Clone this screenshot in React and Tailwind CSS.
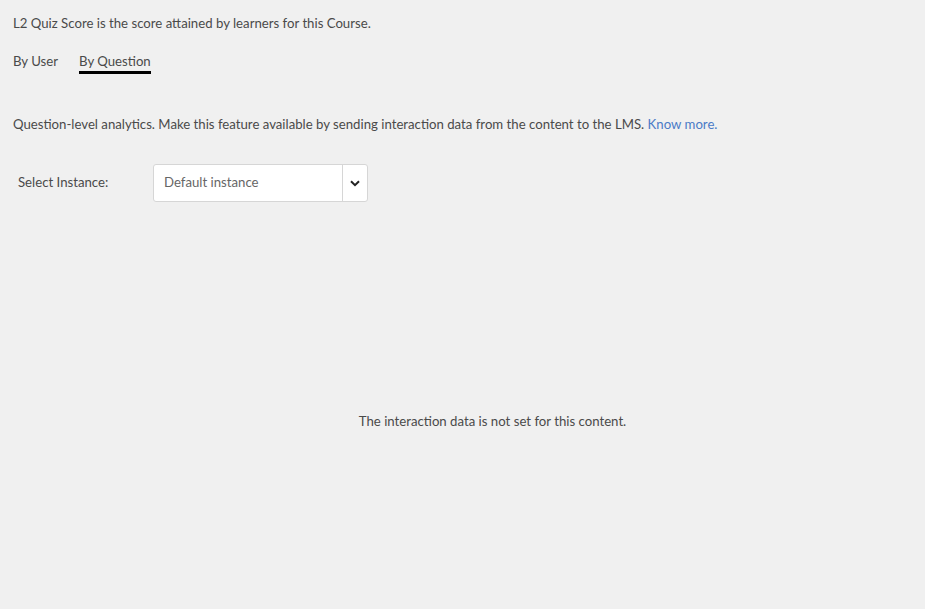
export default function App() {
  return (
    <div className="min-h-[609px] w-full bg-[#f0f0f0] text-[#4a4a4a] text-[13.2px]" style={{ fontFamily: "Lato, 'Open Sans', sans-serif" }}>
      <div className="px-[13px] pt-[14px]">
        <p className="leading-[18px]">L2 Quiz Score is the score attained by learners for this Course.</p>
        <div className="mt-[20px] flex gap-[21px] leading-[18px]">
          <div className="pb-[4px]">By User</div>
          <div className="pb-[1px] border-b-[3px] border-black">By Question</div>
        </div>
        <p className="mt-[41px] leading-[18px]">
          Question-level analytics. Make this feature available by sending interaction data from the content to the LMS.{" "}
          <span className="text-[#4b7bc7]">Know more.</span>
        </p>
        <div className="mt-[31px] flex items-center">
          <div className="w-[140px] pl-[5px]">Select Instance:</div>
          <div className="flex h-[38px] w-[215px] rounded-[3px] border border-[#d6d6d6] bg-white">
            <div className="flex flex-1 items-center pl-[10px] text-[#666]">Default instance</div>
            <div className="flex w-[25px] items-center justify-center border-l border-[#d6d6d6]">
              <svg width="10" height="7" viewBox="0 0 10 7"><path d="M1 1.2 L5 5.2 L9 1.2" fill="none" stroke="#222" strokeWidth="2" /></svg>
            </div>
          </div>
        </div>
        <div className="mt-[210px] flex justify-center pl-[60px]">
          <p className="leading-[18px]">The interaction data is not set for this content.</p>
        </div>
      </div>
    </div>
  );
}
